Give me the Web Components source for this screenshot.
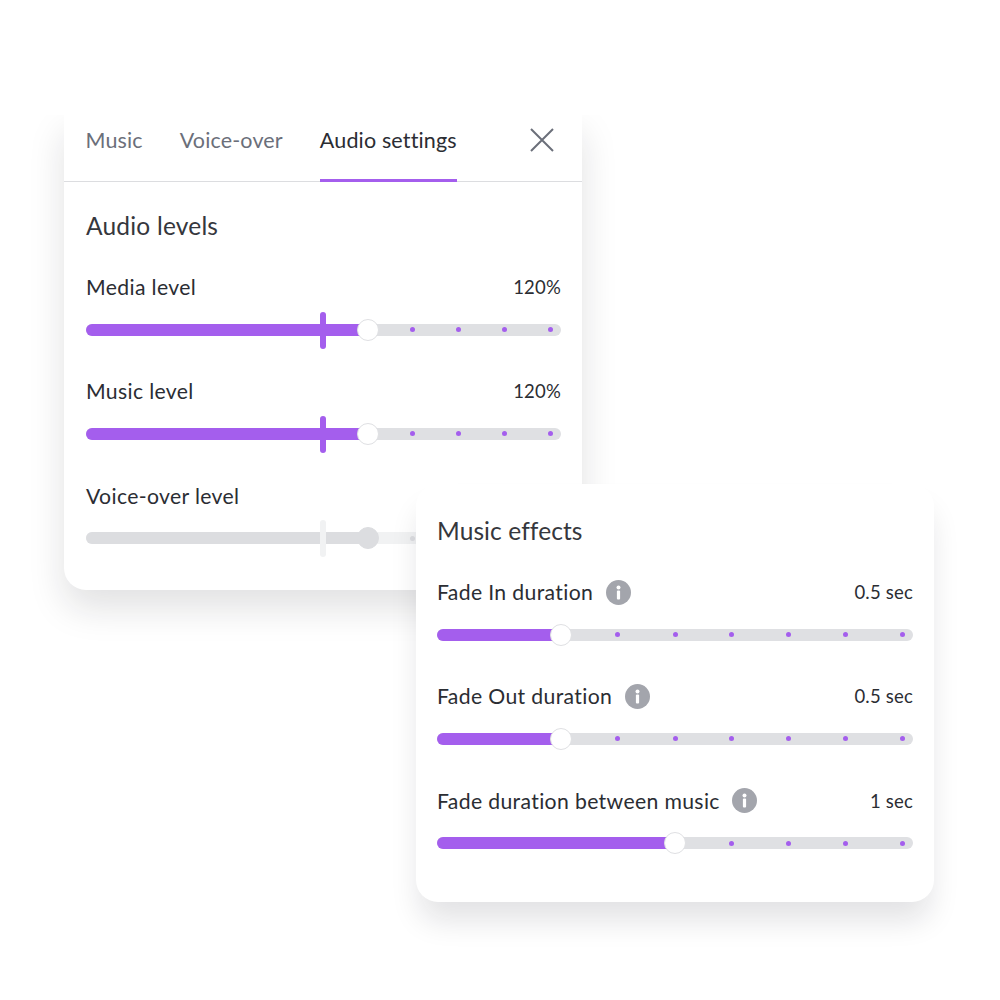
<!DOCTYPE html>
<html>
<head>
<meta charset="utf-8">
<style>
    html, body { margin: 0; background: #fff; }
    body { width: 1000px; height: 1000px; position: relative; overflow: hidden; font-family: "Lato", "Liberation Sans", sans-serif; color: #2b2d33; }
</style>
</head>
<body>
<audio-panel>
    <tab-bar slot="tabs"></tab-bar>
    <level-slider label="Media level" value="120%" percent="59.4" tick="49.9" dots="68.8,78.5,88,97.7"></level-slider>
    <level-slider label="Music level" value="120%" percent="59.4" tick="49.9" dots="68.8,78.5,88,97.7"></level-slider>
    <level-slider label="Voice-over level" percent="59.4" tick="49.9" dots="68.8,78.5,88,97.7" disabled></level-slider>
</audio-panel>
<effects-panel>
    <level-slider label="Fade In duration" value="0.5 sec" percent="26" dots="38,50,61.9,73.8,85.8,97.7" info></level-slider>
    <level-slider label="Fade Out duration" value="0.5 sec" percent="26" dots="38,50,61.9,73.8,85.8,97.7" info></level-slider>
    <level-slider label="Fade duration between music" value="1 sec" percent="50" dots="61.9,73.8,85.8,97.7" info></level-slider>
</effects-panel>
<script>
    class TabBar extends HTMLElement {
        constructor() {
            super();
            this.attachShadow({ mode: 'open' }).innerHTML = `
                <style>
                    :host { display: flex; height: 66px; padding: 0 27px 0 21.5px; border-bottom: 1px solid #dcdde0; font-size: 21.5px; letter-spacing: .15px; color: #6b6f7a; }
                    .tab { padding-top: 9px; margin-right: 37px; height: 57px; line-height: 32px; }
                    .active { color: #2b2d33; border-bottom: 3px solid #a45eed; height: 55px; margin-bottom: -2px; }
                    svg { margin: 12px 0 0 auto; }
                </style>
                <div class="tab">Music</div>
                <div class="tab">Voice-over</div>
                <div class="tab active">Audio settings</div>
                <svg width="26" height="26" viewBox="0 0 26 26" fill="none" stroke="#6b6f7a" stroke-width="2"><path d="M2 2 24 24M24 2 2 24"/></svg>
            `;
        }
    }

    class LevelSlider extends HTMLElement {
        constructor() {
            super();
            this.attachShadow({ mode: 'open' }).innerHTML = `
                <style>
                    :host { display: block; height: 104.3px; }
                    .head { display: flex; align-items: center; height: 32px; font-size: 21.2px; letter-spacing: .35px; }
                    .info { margin-left: 12.5px; width: 25px; height: 25px; }
                    .value { margin-left: auto; font-size: 18.5px; letter-spacing: .2px; }
                    .track { position: relative; height: 12px; margin-top: 20.5px; border-radius: 6px; background: #dfe0e3; }
                    .fill { position: absolute; left: 0; top: 0; bottom: 0; border-radius: 6px 0 0 6px; background: #a45eed; }
                    .tick { position: absolute; top: -12px; width: 6px; height: 37px; margin-left: -3px; border-radius: 3px; background: #a45eed; }
                    .dot { position: absolute; top: 3.5px; width: 5px; height: 5px; margin-left: -2.5px; border-radius: 50%; background: #a45eed; }
                    .thumb { position: absolute; top: -5px; width: 20px; height: 20px; margin-left: -11px; border-radius: 50%; background: #fff; border: 1px solid #dfe0e3; }
                    :host([disabled]) .fill, :host([disabled]) .thumb { background: #dcdde0; border-color: #dcdde0; }
                    :host([disabled]) .tick { background: #f1f2f3; }
                    :host([disabled]) .track { background: #f1f2f3; }
                    :host([disabled]) .dot { background: #dcdde0; }
                </style>
                <div class="head"><span class="label"></span><span class="value"></span></div>
                <div class="track"></div>
            `;
        }

        connectedCallback() {
            let root = this.shadowRoot;
            root.querySelector('.label').textContent = this.getAttribute('label');
            root.querySelector('.value').textContent = this.getAttribute('value') || '';
            if (this.hasAttribute('info')) {
                let tpl = document.createElement('template');
                tpl.innerHTML = `<svg class="info" viewBox="0 0 25 25"><circle cx="12.5" cy="12.5" r="12.5" fill="#a3a5ac"/><circle cx="12.5" cy="7.4" r="2" fill="#fff"/><rect x="10.9" y="10.6" width="3.2" height="9" rx="1" fill="#fff"/></svg>`;
                root.querySelector('.label').after(tpl.content);
            }
            let track = root.querySelector('.track');
            let add = (cls, pos) => {
                let el = document.createElement('div');
                el.className = cls;
                el.style.left = pos + '%';
                track.append(el);
                return el;
            };
            let percent = parseFloat(this.getAttribute('percent'));
            add('fill', 0).style.width = percent + '%';
            (this.getAttribute('dots') || '').split(',').forEach(d => add('dot', parseFloat(d)));
            if (this.hasAttribute('tick')) add('tick', parseFloat(this.getAttribute('tick')));
            add('thumb', percent);
        }
    }

    class AudioPanel extends HTMLElement {
        constructor() {
            super();
            this.attachShadow({ mode: 'open' }).innerHTML = `
                <style>
                    :host { display: block; position: absolute; left: 64px; top: 115px; width: 518px; height: 475px; box-sizing: border-box; background: #fff; border-radius: 0 0 22px 22px; box-shadow: 0 18px 36px rgba(20, 20, 30, .13); clip-path: inset(0 -70px -70px -70px); }
                    .body { padding: 0 21px 0 22px; }
                    h2 { margin: 0; padding-top: 28px; height: 61px; font-size: 24.5px; letter-spacing: .2px; line-height: 32px; font-weight: 400; color: #35373d; }
                </style>
                <slot name="tabs"></slot>
                <div class="body">
                    <h2>Audio levels</h2>
                    <slot></slot>
                </div>
            `;
        }
    }

    class EffectsPanel extends HTMLElement {
        constructor() {
            super();
            this.attachShadow({ mode: 'open' }).innerHTML = `
                <style>
                    :host { display: block; position: absolute; left: 416px; top: 484px; width: 518px; height: 418px; box-sizing: border-box; padding: 0 21px; background: #fff; border-radius: 22px; box-shadow: 0 22px 30px -4px rgba(20, 20, 30, .12); }
                    h2 { margin: 0; padding-top: 31px; height: 61px; font-size: 24.5px; letter-spacing: .1px; line-height: 32px; font-weight: 400; color: #35373d; }
                </style>
                <h2>Music effects</h2>
                <slot></slot>
            `;
        }
    }

    customElements.define('tab-bar', TabBar);
    customElements.define('level-slider', LevelSlider);
    customElements.define('audio-panel', AudioPanel);
    customElements.define('effects-panel', EffectsPanel);
</script>
</body>
</html>
